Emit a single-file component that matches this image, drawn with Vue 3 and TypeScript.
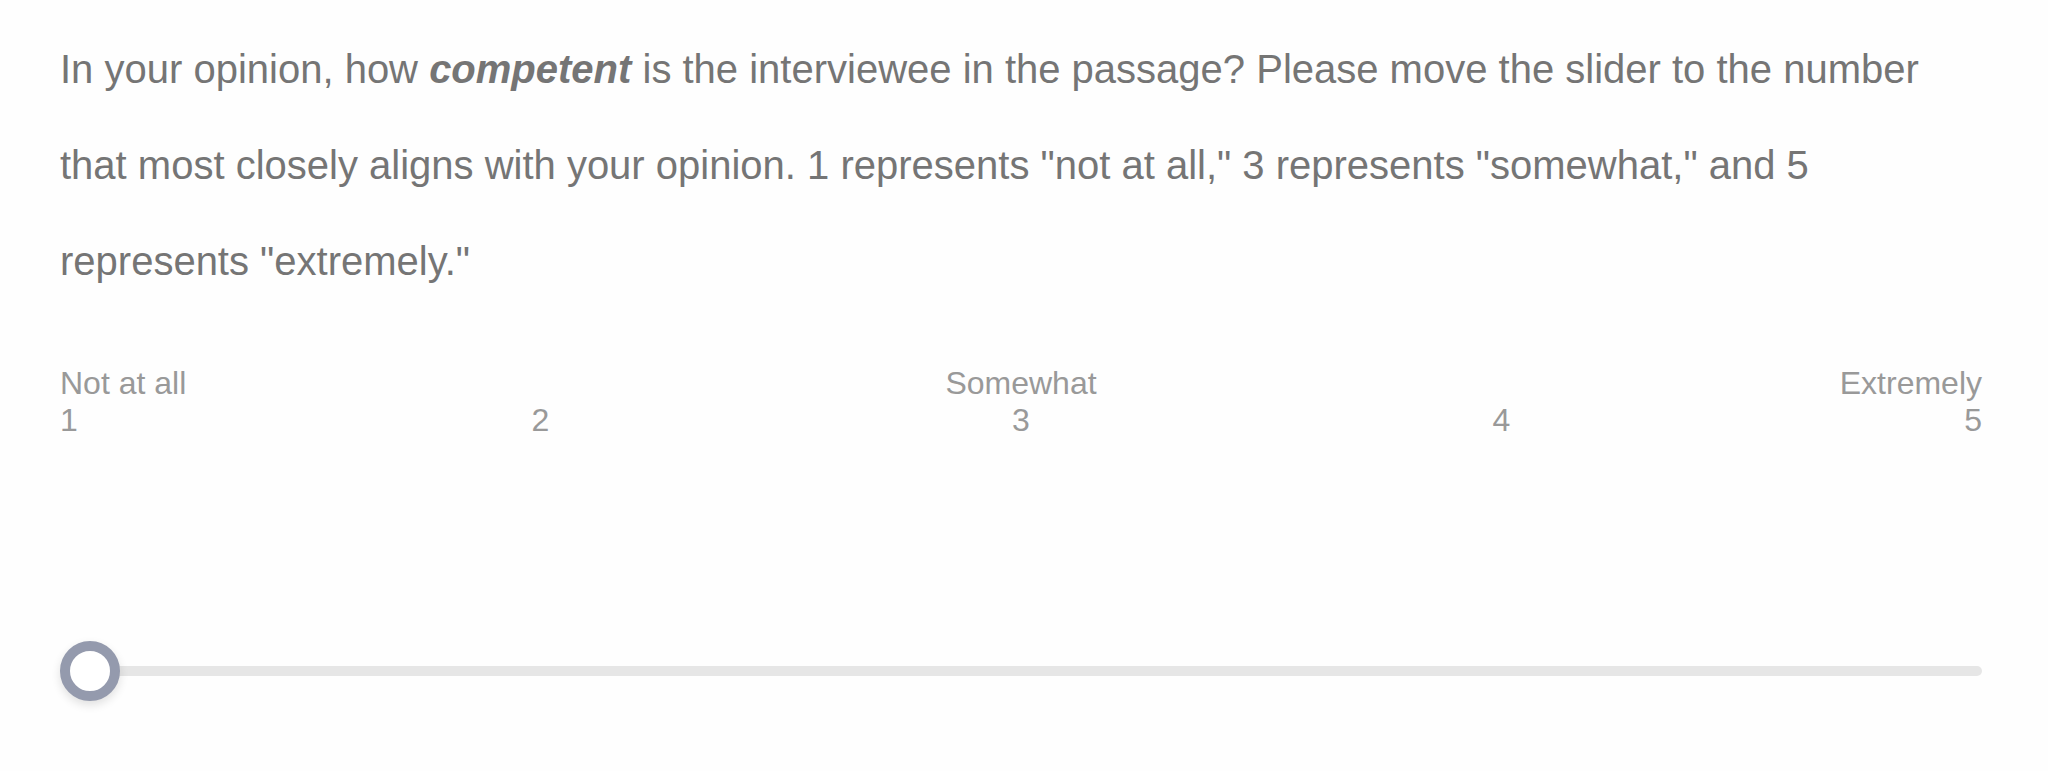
<script setup lang="ts">
import { ref } from 'vue'

interface Mark {
  value: number
  label: string
}

const marks: Mark[] = [
  { value: 1, label: 'Not at all' },
  { value: 2, label: '' },
  { value: 3, label: 'Somewhat' },
  { value: 4, label: '' },
  { value: 5, label: 'Extremely' },
]

const rating = ref<number>(1)
</script>

<template>
  <main class="question">
    <label class="prompt" for="rating">
      In your opinion, how <strong>competent</strong> is the interviewee in the passage? Please
      move the slider to the number that most closely aligns with your opinion. 1 represents "not
      at all," 3 represents "somewhat," and 5 represents "extremely."
    </label>
    <div class="scale">
      <div v-for="mark in marks" :key="mark.value" class="mark">
        <span class="caption">{{ mark.label }}</span>
        <span>{{ mark.value }}</span>
      </div>
    </div>
    <input id="rating" v-model.number="rating" class="slider" type="range" min="1" max="5" step="1" />
  </main>
</template>

<style>
body {
  background: #fefefe;
}
</style>

<style scoped>
.question {
  padding: 21px 66px 0 60px;
  font-family: "Liberation Sans", Arial, sans-serif;
}

.prompt {
  display: block;
  color: #757575;
  font-size: 40px;
  line-height: 96px;
}

.prompt strong {
  font-style: italic;
}

.scale {
  display: flex;
  justify-content: space-between;
  margin-top: 56px;
  color: #999999;
  font-size: 32px;
  line-height: 37px;
}

.mark {
  display: flex;
  flex: 2;
  flex-direction: column;
  align-items: center;
}

.mark:first-child {
  flex: 1;
  align-items: flex-start;
}

.mark:last-child {
  flex: 1;
  align-items: flex-end;
}

.caption {
  min-height: 37px;
}

.slider {
  display: block;
  width: 100%;
  height: 100px;
  margin: 182px 0 0;
  appearance: none;
  background: transparent;
}

.slider::-webkit-slider-runnable-track {
  height: 10px;
  border-radius: 5px;
  background: #e6e6e6;
}

.slider::-webkit-slider-thumb {
  width: 60px;
  height: 60px;
  margin-top: -25px;
  appearance: none;
  box-sizing: border-box;
  border: 10px solid #949aad;
  border-radius: 50%;
  background: #ffffff;
  box-shadow: 0 4px 10px rgba(0, 0, 0, 0.12);
}
</style>
